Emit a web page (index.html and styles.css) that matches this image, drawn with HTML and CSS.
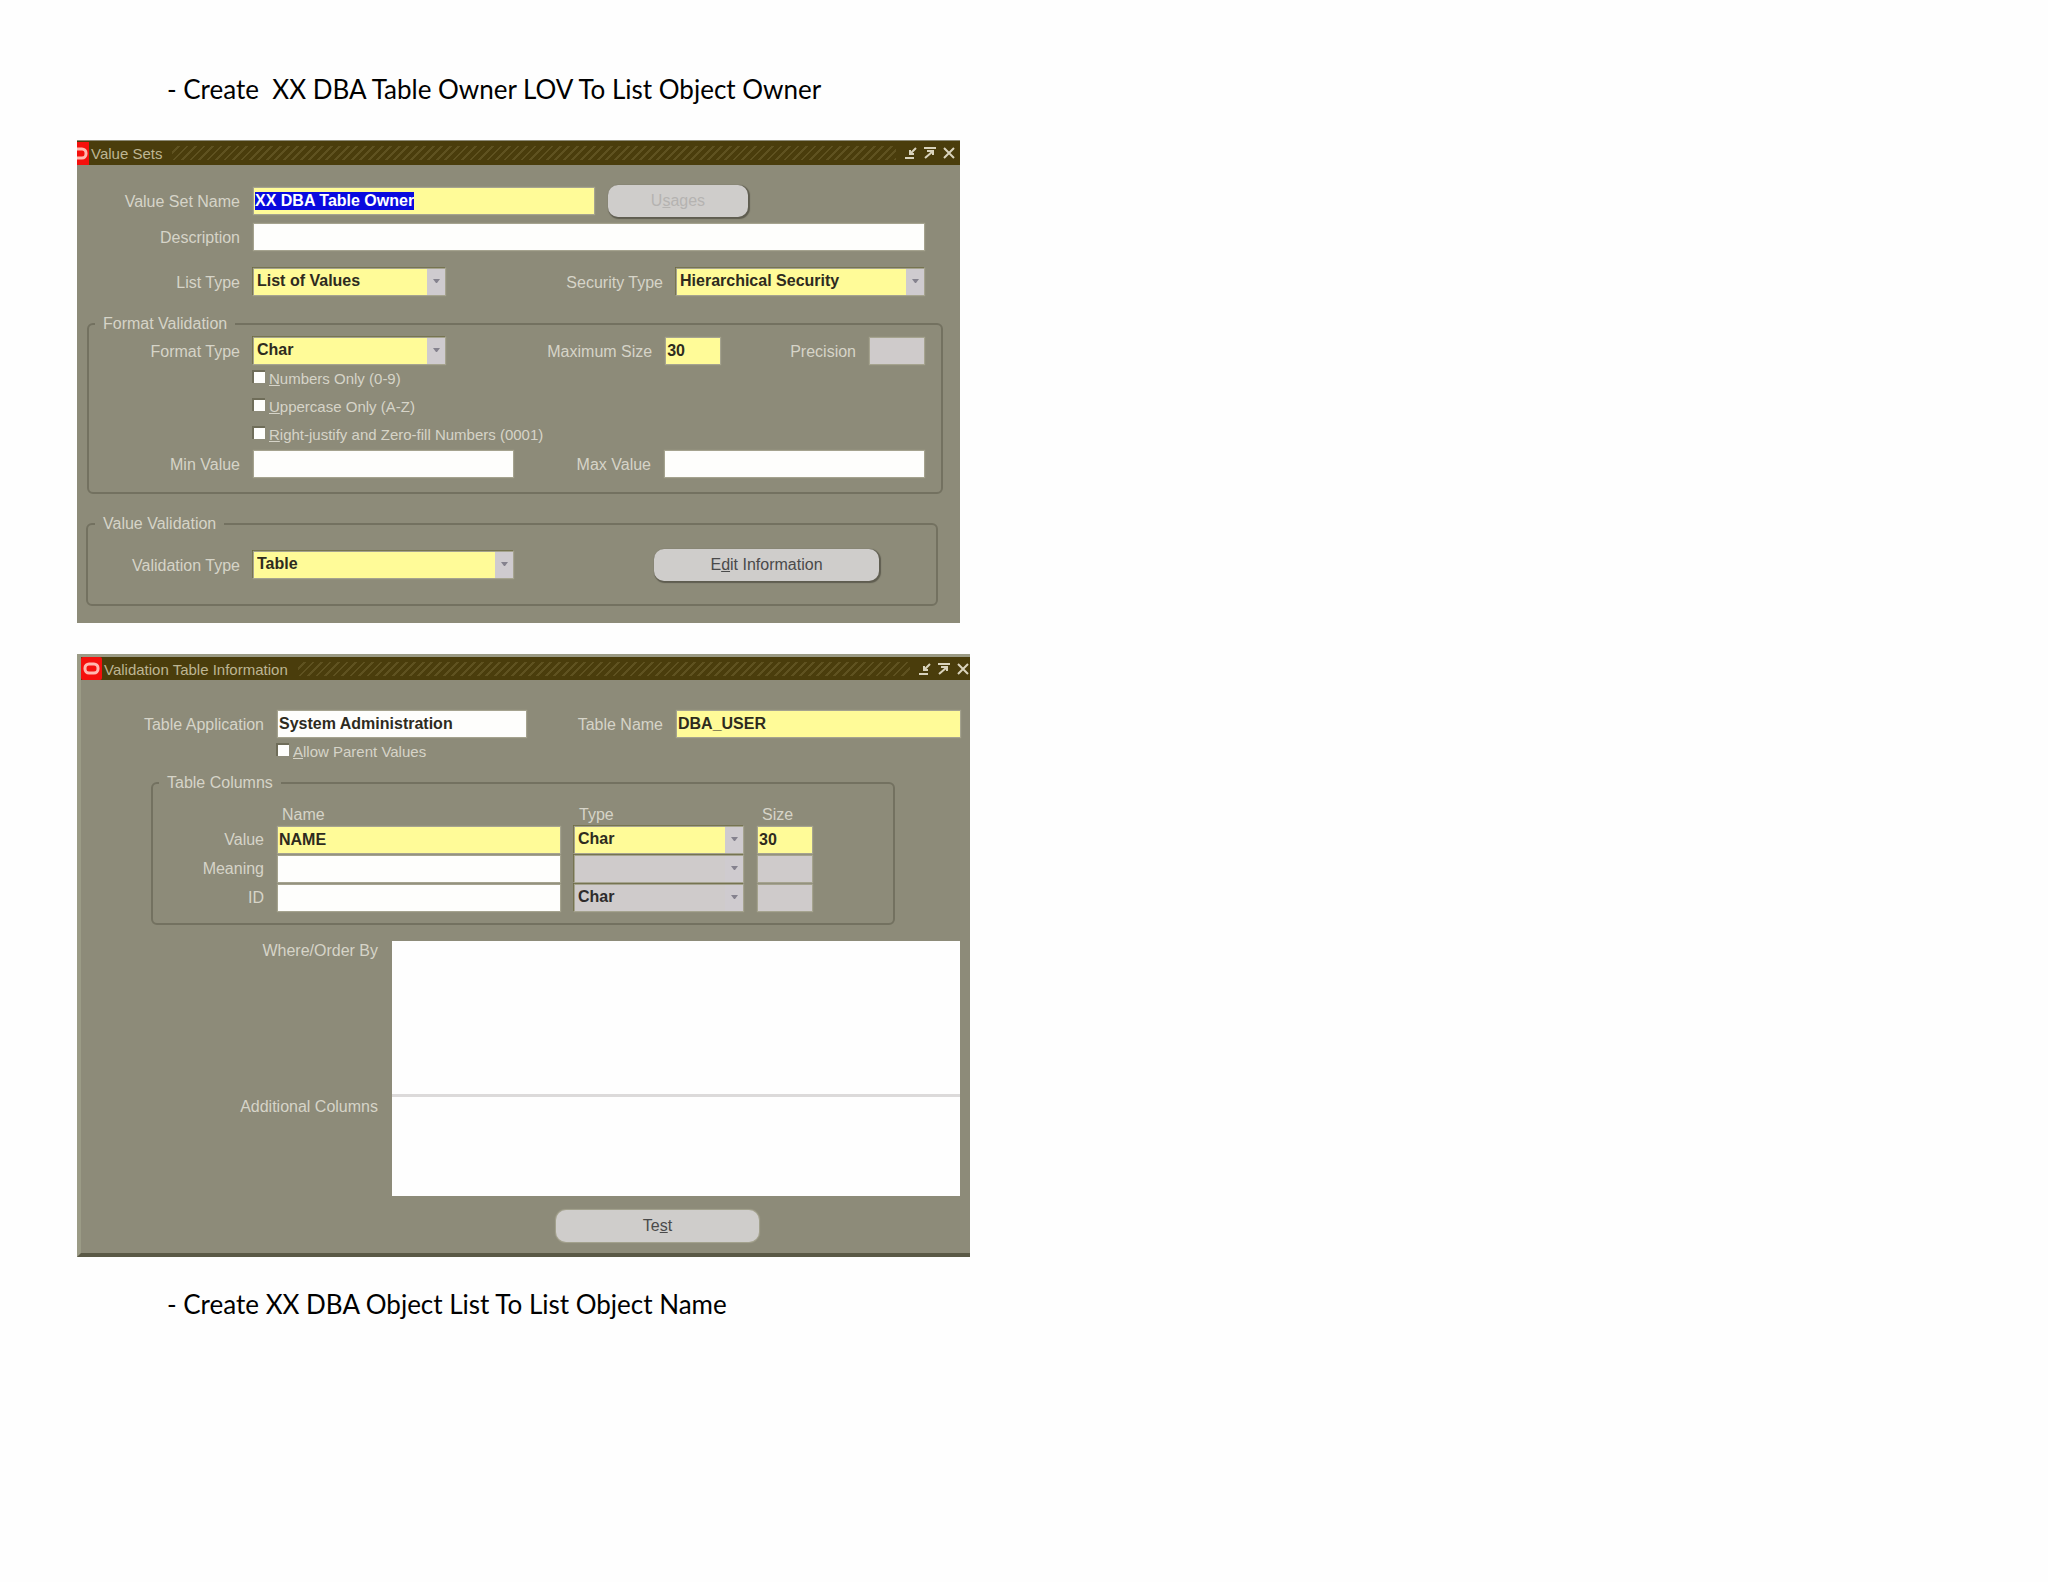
FILE: index.html
```html
<!DOCTYPE html>
<html lang="en">
<head>
<meta charset="utf-8">
<title>Value Sets</title>
<link rel="stylesheet" href="styles.css">
</head>
<body>
<main class="document">
  <p class="step">- Create&nbsp; XX DBA Table Owner LOV To List Object Owner</p>

  <section class="window window-sets">
    <header class="titlebar">
      <svg class="logo logo-cut" width="12" height="23" viewBox="9 0 12 23"><rect x="0" width="21" height="23" fill="#f5100c"/><rect x="4" y="7" width="14" height="9" rx="4" fill="none" stroke="#ffb9b0" stroke-width="3"/></svg>
      <h2 class="title">Value Sets</h2>
      <span class="hatch"></span>
      <span class="controls">
        <button class="control" type="button" aria-label="Minimize"><svg width="14" height="14" viewBox="0 0 14 14"><path d="M1 12H10M12 2L6 8M6 4V8H10" /></svg></button>
        <button class="control" type="button" aria-label="Maximize"><svg width="14" height="14" viewBox="0 0 14 14"><path d="M1 2H13M2 12L9 6M4 5H10V9" /></svg></button>
        <button class="control" type="button" aria-label="Close"><svg width="14" height="14" viewBox="0 0 14 14"><path d="M2 2L12 12M12 2L2 12" /></svg></button>
      </span>
    </header>
    <form class="sets-form">
      <div class="row row-name">
        <label class="label" for="set-name">Value Set Name</label>
        <input class="field required w-name" id="set-name" type="text" value="XX DBA Table Owner">
        <button class="button button-usages" type="button" disabled>U<u>s</u>ages</button>
      </div>
      <div class="row row-description">
        <label class="label" for="description">Description</label>
        <input class="field grow" id="description" type="text">
      </div>
      <div class="row row-types">
        <label class="label" for="list-type">List Type</label>
        <select class="field required w-list" id="list-type"><option>List of Values</option></select>
        <label class="label push" for="security-type">Security Type</label>
        <select class="field required w-security" id="security-type"><option>Hierarchical Security</option></select>
      </div>
      <fieldset class="group group-format">
        <legend>Format Validation</legend>
        <div class="row">
          <label class="label" for="format-type">Format Type</label>
          <select class="field required w-list" id="format-type"><option>Char</option></select>
          <label class="label push" for="max-size">Maximum Size</label>
          <input class="field required w-small" id="max-size" type="text" value="30">
          <label class="label label-precision" for="precision">Precision</label>
          <input class="field w-small" id="precision" type="text" disabled>
        </div>
        <div class="checks">
          <label class="check"><input type="checkbox"><span><u>N</u>umbers Only (0-9)</span></label>
          <label class="check"><input type="checkbox"><span><u>U</u>ppercase Only (A-Z)</span></label>
          <label class="check"><input type="checkbox"><span><u>R</u>ight-justify and Zero-fill Numbers (0001)</span></label>
        </div>
        <div class="row">
          <label class="label" for="min-value">Min Value</label>
          <input class="field w-medium" id="min-value" type="text">
          <label class="label push" for="max-value">Max Value</label>
          <input class="field w-medium" id="max-value" type="text">
        </div>
      </fieldset>
      <fieldset class="group group-value">
        <legend>Value Validation</legend>
        <div class="row">
          <label class="label" for="validation-type">Validation Type</label>
          <select class="field required w-medium" id="validation-type"><option>Table</option></select>
          <button class="button button-edit push" type="button">E<u>d</u>it Information</button>
        </div>
      </fieldset>
    </form>
  </section>

  <section class="window window-table">
    <header class="titlebar">
      <svg class="logo" width="21" height="23" viewBox="0 0 21 23"><rect width="21" height="23" rx="2" fill="#f5100c"/><rect x="4" y="7" width="13" height="9" rx="4" fill="none" stroke="#ffb9b0" stroke-width="3"/></svg>
      <h2 class="title">Validation Table Information</h2>
      <span class="hatch"></span>
      <span class="controls">
        <button class="control" type="button" aria-label="Minimize"><svg width="14" height="14" viewBox="0 0 14 14"><path d="M1 12H10M12 2L6 8M6 4V8H10" /></svg></button>
        <button class="control" type="button" aria-label="Maximize"><svg width="14" height="14" viewBox="0 0 14 14"><path d="M1 2H13M2 12L9 6M4 5H10V9" /></svg></button>
        <button class="control" type="button" aria-label="Close"><svg width="14" height="14" viewBox="0 0 14 14"><path d="M2 2L12 12M12 2L2 12" /></svg></button>
      </span>
    </header>
    <form class="table-form">
      <div class="row">
        <label class="label" for="table-application">Table Application</label>
        <input class="field w-application" id="table-application" type="text" value="System Administration">
        <label class="label push" for="table-name">Table Name</label>
        <input class="field required w-table" id="table-name" type="text" value="DBA_USER">
      </div>
      <div class="checks">
        <label class="check"><input type="checkbox"><span><u>A</u>llow Parent Values</span></label>
      </div>
      <fieldset class="group group-columns">
        <legend>Table Columns</legend>
        <table class="columns">
          <thead>
            <tr><td></td><th scope="col">Name</th><th scope="col">Type</th><th scope="col">Size</th></tr>
          </thead>
          <tbody>
            <tr>
              <th scope="row">Value</th>
              <td><input class="field required w-table" type="text" value="NAME" aria-label="Value name"></td>
              <td><select class="field required w-type" aria-label="Value type"><option>Char</option></select></td>
              <td><input class="field required w-small" type="text" value="30" aria-label="Value size"></td>
            </tr>
            <tr>
              <th scope="row">Meaning</th>
              <td><input class="field w-table" type="text" aria-label="Meaning name"></td>
              <td><select class="field w-type" aria-label="Meaning type" disabled><option></option></select></td>
              <td><input class="field w-small" type="text" aria-label="Meaning size" disabled></td>
            </tr>
            <tr>
              <th scope="row">ID</th>
              <td><input class="field w-table" type="text" aria-label="ID name"></td>
              <td><select class="field w-type" aria-label="ID type" disabled><option>Char</option></select></td>
              <td><input class="field w-small" type="text" aria-label="ID size" disabled></td>
            </tr>
          </tbody>
        </table>
      </fieldset>
      <div class="area-row">
        <label class="label" for="where">Where/Order By</label>
        <textarea class="area area-where" id="where"></textarea>
      </div>
      <div class="area-row">
        <label class="label" for="additional">Additional Columns</label>
        <textarea class="area area-additional" id="additional"></textarea>
      </div>
      <button class="button button-test" type="button">Te<u>s</u>t</button>
    </form>
  </section>

  <p class="step">- Create XX DBA Object List To List Object Name</p>
</main>
<script src="script.js"></script>
</body>
</html>
```

FILE: script.js
```js
// The set name opens focused, with its text selected.
var setName = document.getElementById("set-name");
setName.focus({ preventScroll: true });
setName.select();
```

FILE: styles.css
```css
* {
  box-sizing: border-box;
}

body {
  margin: 0;
  background: #fefefe;
  color: #000;
  font: 16px/18px "Liberation Sans", Arial, sans-serif;
}

.document {
  padding: 73px 77px;
}

.step {
  margin: 0;
  padding-left: 90px;
  font: 26px/32px Lato, "Open Sans", sans-serif;
}

.window {
  background: #8d8b79;
  color: #d6d4c8;
}

.window-sets {
  max-width: 883px;
  margin: 35px 0 31px;
  border-top: 1px solid #8d8b79;
}

.window-table {
  max-width: 893px;
  margin-bottom: 31px;
  border: solid #9b9b86;
  border-width: 3px 0 4px 4px;
  border-bottom-color: #5a5946;
}

/* Title bar */
.titlebar {
  display: flex;
  align-items: center;
  height: 24px;
  background: #4a3d0c;
}

.window-table .titlebar {
  height: 23px;
}

.logo {
  flex: none;
}

.title {
  margin: 0 10px 0 2px;
  padding-top: 2px;
  font-size: 15px;
  font-weight: normal;
  color: #bdb593;
}

.hatch {
  flex: 1;
  height: 14px;
  background: repeating-linear-gradient(135deg, #4a3d0c 0 4px, #5f5220 4px 6px);
}

.controls {
  display: flex;
  gap: 5px;
  padding: 0 4px 0 8px;
}

.window-table .controls {
  padding-right: 0;
}

.control {
  display: flex;
  padding: 0;
  border: 0;
  background: none;
}

.control path {
  fill: none;
  stroke: #d9d3bd;
  stroke-width: 2;
}

/* Rows */
.row {
  display: flex;
  align-items: center;
  gap: 14px;
}

.label {
  flex: none;
  text-align: right;
}

.row > .label {
  padding-top: 1px;
}

.row > .label:first-child {
  width: 163px;
}

.group .row > .label:first-child {
  width: 151px;
}

.table-form .row > .label:first-child {
  width: 183px;
}

.row > .push {
  margin-left: auto;
}

.sets-form {
  padding: 20px 17px 17px 0;
}

.row-name,
.row-description,
.row-types {
  padding-right: 19px;
}

.row-description {
  margin: 7px 0 19px;
}

.row-types {
  margin-bottom: 20px;
}

.label-precision {
  margin-left: 56px;
}

/* Fields */
.field {
  height: 26px;
  margin: 0;
  padding: 0 1px 1px;
  border: 0;
  border-radius: 0;
  background-color: #fefefc;
  box-shadow: 0 0 1px 1px #a5a38f;
  color: #2e2b1e;
  font: bold 16px/22px "Liberation Sans", Arial, sans-serif;
  outline: 0;
}

.field.required {
  background-color: #fffb98;
}

.field:disabled {
  background-color: #cfcbcb;
  color: #2e2b2b;
  opacity: 1;
}

.field::selection {
  background: #0a0ade;
  color: #fff;
}

select.field {
  appearance: none;
  padding: 0 20px 2px 3px;
  box-shadow: 0 0 1px 1px #a5a38f, -1px -1px 0 1px #6d6a45;
  background-image: url("data:image/svg+xml,%3Csvg xmlns='http://www.w3.org/2000/svg' width='18' height='26'%3E%3Crect width='18' height='26' fill='%23cfcbcf'/%3E%3Cpath d='M6 10h7l-3 4h-1z' fill='%2385828e'/%3E%3C/svg%3E");
  background-position: right top;
  background-repeat: no-repeat;
}

.grow { flex: 1; }
.w-name { width: 340px; }
.w-list { width: 191px; }
.w-security { width: 247px; }
.w-medium { width: 259px; }
.w-small { width: 54px; }
.w-application { width: 248px; }
.w-table { width: 283px; }
.w-type { width: 168px; }

.columns .w-table { width: 282px; }

.checks {
  display: flex;
  flex-direction: column;
  padding: 1px 0 2px 165px;
}

.table-form .checks {
  padding: 1px 0 1px 197px;
}

.check {
  display: flex;
  align-items: center;
  gap: 4px;
  height: 28px;
  font-size: 15px;
}

.check input {
  appearance: none;
  width: 11px;
  height: 11px;
  margin: 0 0 3px;
  background: #fefefc;
  box-shadow: -1px -1px 0 1px #6f6d59;
}

/* Buttons */
.button {
  height: 32px;
  padding: 0;
  border: 0;
  border-radius: 10px;
  background: #cfcdcb;
  box-shadow: 1px 1px 1px 1px #5f5d50;
  color: #4a4a4a;
  font: 16px/18px "Liberation Sans", Arial, sans-serif;
}

.button:disabled {
  color: #b5b3b1;
}

.button-usages {
  width: 140px;
}

.button-edit {
  width: 225px;
}

.button-test {
  display: block;
  width: 203px;
  margin: 14px 0 0 475px;
  box-shadow: 0 0 1px 1px #a5a38f;
}

/* Groups */
.group {
  min-width: 0;
  margin: 0;
  border: 2px solid #737160;
  border-radius: 6px;
}

.group legend {
  height: 18px;
  margin-left: 6px;
  padding: 0 8px;
}

.group-format {
  margin: 0 0 21px 10px;
  padding: 5px 17px 15px 0;
}

.group-value {
  margin: 0 5px 0 9px;
  padding: 16px 57px 23px 1px;
}

.group-columns {
  margin: 7px 65px 16px 70px;
  padding: 14px 0 9px;
}

/* Column table */
.table-form {
  padding: 31px 10px 11px 0;
}

.columns {
  border-collapse: collapse;
}

.columns th,
.columns td {
  padding: 0 15px 3px 0;
  text-align: left;
  font-weight: normal;
  line-height: 18px;
}

.columns td {
  height: 29px;
}

.columns thead th,
.columns thead td {
  height: 21px;
  padding-left: 4px;
}

.columns tbody th {
  width: 125px;
  padding-right: 14px;
  text-align: right;
}

.columns .field {
  display: block;
}

/* Text areas */
.area-row {
  display: flex;
  gap: 14px;
}

.area-row .label {
  width: 297px;
  padding-top: 1px;
}

.area {
  flex: 1;
  display: block;
  padding: 4px;
  border: 0;
  background: #fefefe;
  font: bold 16px/18px "Liberation Sans", Arial, sans-serif;
  resize: none;
}

.area-where {
  height: 156px;
  border-bottom: 3px solid #dcdada;
}

.area-additional {
  height: 99px;
}
```
